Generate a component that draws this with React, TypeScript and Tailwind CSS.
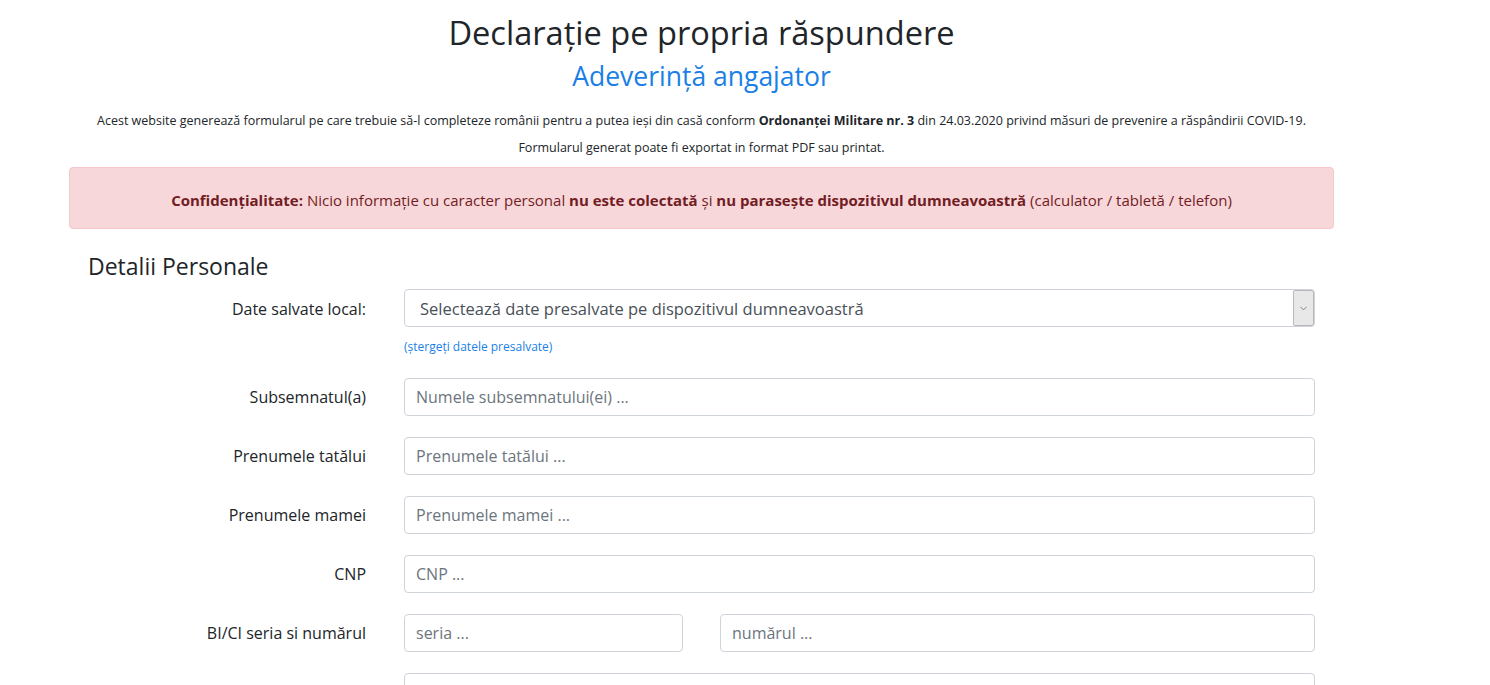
import { ChevronDown } from 'lucide-react';

const rows = [
  { label: 'Subsemnatul(a)', placeholder: 'Numele subsemnatului(ei) ...' },
  { label: 'Prenumele tatălui', placeholder: 'Prenumele tatălui ...' },
  { label: 'Prenumele mamei', placeholder: 'Prenumele mamei ...' },
  { label: 'CNP', placeholder: 'CNP ...' },
];

const inputCls =
  'h-[38px] w-full rounded-[4px] border border-[#ced4da] bg-white px-[11px] text-[16px] text-[#495057] placeholder:text-[#6c757d] outline-none';

export default function App() {
  return (
    <div
      className="min-h-[685px] bg-white text-[#212529]"
      style={{ fontFamily: '"Open Sans", "Noto Sans", sans-serif' }}
    >
      <div className="ml-[69px] w-[1265px]">
        <h1 className="pt-[10px] text-center text-[32.6px] leading-[46px] text-[#212529]">
          Declarație pe propria răspundere
        </h1>
        <h3 className="mt-[1px] text-center text-[26.5px] leading-[38px] text-[#1a7fe6]">
          Adeverință angajator
        </h3>
        <p className="mt-[13px] text-center text-[12.5px] leading-[26px]">
          Acest website generează formularul pe care trebuie să-l completeze românii pentru a putea ieși din casă conform{' '}
          <b>Ordonanței Militare nr. 3</b> din 24.03.2020 privind măsuri de prevenire a răspândirii COVID-19.
        </p>
        <p className="mt-px text-center text-[12.5px] leading-[26px]">
          Formularul generat poate fi exportat in format PDF sau printat.
        </p>

        <div className="mt-[6px] flex h-[62px] items-center justify-center rounded-[4px] border border-[#f5c6cb] bg-[#f8d7da] pt-[5px] text-[15px] text-[#721c24]">
          <span>
            <b>Confidențialitate:</b> Nicio informație cu caracter personal <b>nu este colectată</b> și{' '}
            <b>nu parasește dispozitivul dumneavoastră</b> (calculator / tabletă / telefon)
          </span>
        </div>

        <div className="px-[19px]">
          <h4 className="mt-[21px] text-[23px] leading-[32px]">Detalii Personale</h4>

          <div className="mt-[7px] flex items-start">
            <label className="w-[278px] shrink-0 pt-[9px] text-right text-[16px] leading-[22px]">
              Date salvate local:
            </label>
            <div className="ml-[38px] flex-1">
              <div className="flex h-[38px] items-center rounded-[4px] border border-[#ced4da] bg-white">
                <span className="flex-1 pl-[15px] pt-[2px] text-[16.5px] text-[#495057]">
                  Selectează date presalvate pe dispozitivul dumneavoastră
                </span>
                <div className="flex h-[36px] w-[21px] items-center justify-center rounded-[2px] border border-[#b8b8b8] bg-[#e8e8e8]">
                  <ChevronDown className="h-[11px] w-[11px] text-[#555]" strokeWidth={1.5} />
                </div>
              </div>
              <a className="mt-[12px] block text-[12px] leading-[16px] text-[#1a7fe6]">(ștergeți datele presalvate)</a>
            </div>
          </div>

          <div className="mt-[23px] flex flex-col gap-[21px]">
            {rows.map((r) => (
              <div key={r.label} className="flex items-center">
                <label className="w-[278px] shrink-0 text-right text-[16px]">{r.label}</label>
                <div className="ml-[38px] flex-1">
                  <input className={inputCls} placeholder={r.placeholder} />
                </div>
              </div>
            ))}
            <div className="flex items-center">
              <label className="w-[278px] shrink-0 text-right text-[16px]">BI/CI seria si numărul</label>
              <div className="ml-[38px] flex flex-1 gap-[37px]">
                <input className={inputCls + ' !w-[279px] shrink-0'} placeholder="seria ..." />
                <input className={inputCls} placeholder="numărul ..." />
              </div>
            </div>
            <div className="flex items-center">
              <label className="w-[278px] shrink-0 text-right text-[16px]">Domiciliul</label>
              <div className="ml-[38px] flex-1">
                <input className={inputCls} placeholder="Strada ..." />
              </div>
            </div>
          </div>
        </div>
      </div>
    </div>
  );
}
